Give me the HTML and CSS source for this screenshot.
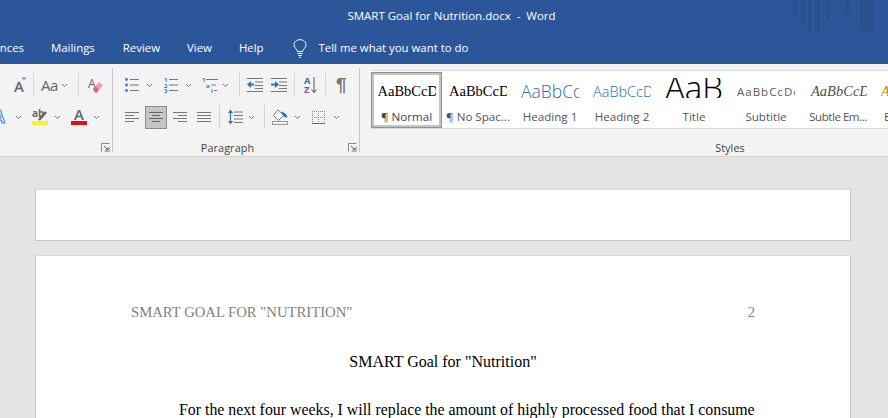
FILE: index.html
```html
<!DOCTYPE html>
<html lang="en">
<head>
<meta charset="utf-8">
<title>SMART Goal for Nutrition.docx - Word</title>
<link rel="stylesheet" href="styles.css">
</head>
<body>
<svg class="defs" width="0" height="0" aria-hidden="true">
  <symbol id="chev" viewBox="0 0 7 5"><path d="M1 1 3.500 3.500 6 1" fill="none" stroke="#777" stroke-width="1"/></symbol>
  <symbol id="launch" viewBox="0 0 9 9"><path d="M.5 8.500V.5H8.500" fill="none" stroke="#888"/><path d="M8.500 3.500V8.500H3.500" fill="none" stroke="#aaa"/><path d="M3 3 7 7M7 4.500V7H4.500" fill="none" stroke="#555"/></symbol>
</svg>
<header class="titlebar">
  <svg class="watermark" width="95" height="34" viewBox="0 0 95 34" aria-hidden="true">
    <g fill="#27508f"><rect x="0" width="5" height="16"/><rect x="7" width="5" height="25"/><rect x="15" width="4" height="31"/><rect x="22" width="5" height="32"/><rect x="33" width="3" height="20"/><rect x="52" width="4" height="14"/></g>
    <path d="M67 0H80V32H72Q67 28 67 20Z" fill="#2a4f89"/>
  </svg>
  <div class="doc-title">SMART Goal for Nutrition.docx&nbsp; - &nbsp;Word</div>
  <nav class="tabs">
    <span class="tab tab-clip">nces</span>
    <span class="tab t-mail">Mailings</span>
    <span class="tab t-rev">Review</span>
    <span class="tab t-view">View</span>
    <span class="tab t-help">Help</span>
    <svg class="bulb" width="14" height="19" viewBox="0 0 14 19" aria-hidden="true"><path d="M4.500 12.500C4 10 1 9 1 5.800 1 2.800 3.600 .7 7 .7S13 2.800 13 5.800C13 9 10 10 9.500 12.500ZM4.500 14.500H9.500M5 16.500H9M6 18.400H8" fill="none" stroke="#fff" stroke-width="1"/></svg>
    <span class="tab t-tell">Tell me what you want to do</span>
  </nav>
</header>
<section class="ribbon">
  <div class="group g-font">
    <div class="row">
      <svg class="ml14" width="13" height="18" viewBox="0 0 13 18"><text x="0" y="16" class="ico-a">A</text><path d="M7.500 1.500H12.500L10 4Z" fill="#4a86c5"/></svg>
      <i class="sep ml6"></i>
      <span class="aa ml7">Aa</span>
      <svg class="chev ml5"><use href="#chev"/></svg>
      <i class="sep ml10"></i>
      <svg class="ml9" width="15" height="18" viewBox="0 0 15 18"><text x="0" y="12" class="ico-a small">A</text><path d="M5 13 11 6 15 9 9 16.500H7Z" fill="#f09fae"/><path d="M5 13 7.500 10.500 11 13.500 9 16.500H7Z" fill="#e2637f"/></svg>
    </div>
    <div class="row">
      <svg class="mln8" width="16" height="18" viewBox="0 0 16 18"><text x="1" y="15" class="ico-fx">A</text></svg>
      <svg class="chev ml7"><use href="#chev"/></svg>
      <svg class="ml10" width="16" height="18" viewBox="0 0 16 18"><text x="0" y="9" class="ico-ab">ab</text><path d="M7 12 14 4" stroke="#666" stroke-width="2.600"/><rect y="13" width="16" height="4" fill="#ffee33"/></svg>
      <svg class="chev ml6"><use href="#chev"/></svg>
      <svg class="ml10" width="16" height="18" viewBox="0 0 16 18"><text x="3" y="12" class="ico-a">A</text><rect y="13" width="16" height="4" fill="#e30b17"/></svg>
      <svg class="chev ml6"><use href="#chev"/></svg>
    </div>
    <svg class="launcher"><use href="#launch"/></svg>
  </div>
  <div class="group g-para">
    <div class="row">
      <svg class="ml12" width="14" height="16" viewBox="0 0 14 16"><g fill="#3f78b5"><circle cx="1.500" cy="2.500" r="1.400"/><circle cx="1.500" cy="8" r="1.400"/><circle cx="1.500" cy="13.500" r="1.400"/></g><path d="M5 2.500H14M5 8H14M5 13.500H14" stroke="#777"/></svg>
      <svg class="chev ml7"><use href="#chev"/></svg>
      <svg class="ml11" width="14" height="16" viewBox="0 0 14 16"><g class="ico-num"><text x="0" y="5">1</text><text x="0" y="10.500">2</text><text x="0" y="16">3</text></g><path d="M5 2.500H14M5 8H14M5 13.500H14" stroke="#777"/></svg>
      <svg class="chev ml7"><use href="#chev"/></svg>
      <svg class="ml10" width="16" height="16" viewBox="0 0 16 16"><g class="ico-num"><text x="0" y="5">1</text><text x="4" y="10.500">a</text><text x="9" y="16">i</text></g><path d="M4 2.500H16M9 8H14M12 13.500H15" stroke="#777"/></svg>
      <svg class="chev ml4"><use href="#chev"/></svg>
      <i class="sep ml10"></i>
      <svg class="ml7" width="16" height="14" viewBox="0 0 16 14"><path d="M0 .5H16M8 4H16M8 7.500H16M8 10.500H16M0 13.500H16" stroke="#777"/><path d="M0 6.500 4 3V5.500H7V7.500H4V10Z" fill="#2e75b6"/></svg>
      <svg class="ml8" width="16" height="14" viewBox="0 0 16 14"><path d="M0 .5H16M8 4H16M8 7.500H16M8 10.500H16M0 13.500H16" stroke="#777"/><path d="M8 6.500 4 3V5.500H0V7.500H4V10Z" fill="#2e75b6"/></svg>
      <i class="sep ml7"></i>
      <svg class="ml9" width="13" height="18" viewBox="0 0 13 18"><text x="0" y="8" class="ico-az az-a">A</text><text x="0" y="17" class="ico-az az-z">Z</text><path d="M10 1V16M7.500 13.500 10 16.500 12.500 13.500" fill="none" stroke="#666" stroke-width="1.100"/></svg>
      <i class="sep ml8"></i>
      <span class="pilcrow ml10">¶</span>
    </div>
    <div class="row">
      <svg class="ml12" width="14" height="11" viewBox="0 0 14 11"><path d="M0 .5H14M0 3.500H9M0 6.500H14M0 9.500H9" stroke="#777"/></svg>
      <span class="active ml6"><svg width="14" height="11" viewBox="0 0 14 11"><path d="M0 .5H14M3 3.500H11M0 6.500H14M3 9.500H11" stroke="#666"/></svg></span>
      <svg class="ml6" width="14" height="11" viewBox="0 0 14 11"><path d="M0 .5H14M5 3.500H14M0 6.500H14M5 9.500H14" stroke="#777"/></svg>
      <svg class="ml10" width="14" height="11" viewBox="0 0 14 11"><path d="M0 .5H14M0 3.500H14M0 6.500H14M0 9.500H14" stroke="#777"/></svg>
      <i class="sep ml8"></i>
      <svg class="ml8" width="15" height="16" viewBox="0 0 15 16"><path d="M6 3H15M6 6.500H15M6 10H15M6 13.500H15" stroke="#777"/><path d="M2.500 3V13" stroke="#2e75b6" stroke-width="1.200"/><path d="M0 4 2.500 .5 5 4ZM0 12 2.500 15.500 5 12Z" fill="#2e75b6"/></svg>
      <svg class="chev ml5"><use href="#chev"/></svg>
      <i class="sep ml9"></i>
      <svg class="ml7" width="16" height="16" viewBox="0 0 16 16"><path d="M6 .8 1.500 6.500 6.500 11.500 11.500 6.500Z" fill="#fff" stroke="#777"/><path d="M9 2.500C12 3 15 5 15.500 8.500L12 8Z" fill="#2e75b6"/><rect x=".5" y="12.500" width="15" height="3" fill="none" stroke="#999"/></svg>
      <svg class="chev ml6"><use href="#chev"/></svg>
      <svg class="ml11" width="13" height="13" viewBox="0 0 13 13"><path d="M.5 0V12M6.500 0V12M12.500 0V12M0 .5H13M0 6.500H13" fill="none" stroke="#8a8a8a" stroke-dasharray="1 1"/><path d="M0 12.500H13" stroke="#666"/></svg>
      <svg class="chev ml8"><use href="#chev"/></svg>
    </div>
    <div class="g-label g-label-para">Paragraph</div>
    <svg class="launcher"><use href="#launch"/></svg>
  </div>
  <div class="group g-styles">
    <div class="gallery">
      <div class="style selected"><div class="pv pv-normal">AaBbCcDd</div><div class="lbl">¶ Normal</div></div>
      <div class="style"><div class="pv pv-normal">AaBbCcDd</div><div class="lbl">¶ No Spac...</div></div>
      <div class="style"><div class="pv pv-h1">AaBbCcD</div><div class="lbl">Heading 1</div></div>
      <div class="style"><div class="pv pv-h2">AaBbCcDd</div><div class="lbl">Heading 2</div></div>
      <div class="style"><div class="pv pv-title">AaB</div><div class="lbl">Title</div></div>
      <div class="style"><div class="pv pv-sub">AaBbCcDd</div><div class="lbl">Subtitle</div></div>
      <div class="style"><div class="pv pv-em pv-subtle">AaBbCcDd</div><div class="lbl lbl-tight">Subtle Em...</div></div>
      <div class="style"><div class="pv pv-em pv-int">AaBbCcDd</div><div class="lbl">Emphasis</div></div>
    </div>
    <div class="g-label g-label-styles">Styles</div>
  </div>
</section>
<main class="canvas">
  <div class="page page-end"></div>
  <article class="page page-two">
    <div class="running"><span>SMART GOAL FOR "NUTRITION"</span><span>2</span></div>
    <h1 class="doc-h">SMART Goal for "Nutrition"</h1>
    <p class="doc-p">For the next four weeks, I will replace the amount of highly processed food that I consume</p>
  </article>
</main>
</body>
</html>
```
FILE: styles.css
```css
* { box-sizing: border-box; }
html, body { margin: 0; height: 100%; overflow: hidden; }
body { width: 888px; height: 418px; background: #e4e4e4; font-family: "Open Sans", "Noto Sans", sans-serif; display: flex; flex-direction: column; }
.defs { display: block; height: 0; }

.titlebar { position: relative; height: 64px; background: #2b579a; color: #fff; flex: none; }
.watermark { position: absolute; left: 793px; top: 0; }
.doc-title { height: 32px; line-height: 32px; text-align: center; font-size: 11.500px; padding-left: 15px; }
.tabs { height: 32px; display: flex; align-items: center; font-size: 11.400px; position: relative; overflow: hidden; }
.tab { white-space: nowrap; line-height: 34px; }
.tab-clip { width: 24px; direction: rtl; overflow: hidden; }
.t-mail { margin-left: 27px; }
.t-rev { margin-left: 28px; }
.t-view { margin-left: 27px; }
.t-help { margin-left: 27px; }
.bulb { margin-left: 29px; flex: none; }
.t-tell { margin-left: 12px; }

.ribbon { height: 93px; flex: none; background: #f3f3f3; border-bottom: 1px solid #d4d4d4; display: flex; align-items: flex-start; overflow: hidden; }
.group { position: relative; margin-top: 4px; height: 84px; flex: none; border-right: 1px solid #c6c6c6; padding-top: 1px; }
.g-font { width: 113px; overflow: hidden; }
.g-para { width: 247px; }
.g-styles { width: 734px; border-right: 0; padding: 2px 0 0 11px; }
.row { height: 32px; display: flex; align-items: center; }
.row svg { flex: none; }
.chev { width: 7px; height: 5px; }
.sep { display: block; width: 1px; height: 24px; background: #d4d4d4; flex: none; }
.ml4 { margin-left: 4px; } .ml5 { margin-left: 5px; } .ml6 { margin-left: 6px; } .ml7 { margin-left: 7px; }
.ml8 { margin-left: 8px; } .ml9 { margin-left: 9px; } .ml10 { margin-left: 10px; } .ml11 { margin-left: 11px; }
.ml12 { margin-left: 12px; } .ml14 { margin-left: 14px; } .mln8 { margin-left: -8px; }

.ico-a { font: 600 15px "Open Sans", sans-serif; fill: #666; }
.ico-a.small { font-size: 12px; font-weight: 400; }
.ico-fx { font: 700 17px "Open Sans", sans-serif; fill: #dcebf8; stroke: #4a86c5; stroke-width: 1; }
.ico-ab { font: 700 10px "Open Sans", sans-serif; fill: #666; }
.ico-num text { font: 700 6px "Open Sans", sans-serif; fill: #3f78b5; }
.ico-az { font: 700 9.500px "Open Sans", sans-serif; }
.az-a { fill: #2e75b6; }
.az-z { fill: #7a5aa6; }
.aa { font-size: 15px; line-height: 18px; color: #666; font-weight: 400; width: 15px; letter-spacing: -.6px; white-space: nowrap; }
.pilcrow { font: 700 19px/20px "Liberation Sans", sans-serif; color: #777; }
.active { width: 22px; height: 23px; background: #c6c6c6; border: 1px solid #8a8a8a; display: flex; align-items: center; justify-content: center; flex: none; }

.launcher { position: absolute; right: 2px; bottom: 0; width: 9px; height: 9px; }
.g-label { position: absolute; left: 0; right: 0; top: 71px; height: 18px; line-height: 18px; text-align: center; font-size: 10.800px; color: #444; letter-spacing: .1px; }
.g-label-para { padding-right: 17px; }
.g-label-styles { padding-left: 6px; }

.gallery { height: 59px; background: #fff; border: solid #d8d8d8; border-width: 1px 0; display: flex; padding-top: 1px; }
.style { width: 72px; height: 56px; flex: none; padding-top: 7px; text-align: center; }
.style.selected { width: 71px; border: 1px solid #909090; box-shadow: inset 0 0 0 2px #c4c4c4; padding-top: 6px; }
.pv { width: 58px; height: 25px; line-height: 25px; margin: 0 auto; overflow: hidden; white-space: nowrap; text-align: left; }
.lbl { height: 20px; margin-top: 3px; line-height: 20px; font-size: 11.600px; color: #555; white-space: nowrap; }
.lbl-tight { letter-spacing: -.5px; }
.selected .lbl { color: #444; }
.pv-normal { font: 14.500px/25px "Liberation Serif", serif; color: #000; }
.pv-h1 { font: 300 17.500px/25px "Open Sans", sans-serif; color: #2a6cab; }
.pv-h2 { font: 300 14.500px/25px "Open Sans", sans-serif; color: #2a6cab; }
.pv-title { height: 20px; margin: -1px auto 9px; font: 300 33px/20px "Open Sans", sans-serif; color: #000; }
.pv-sub { font: 400 11.500px/25px "Open Sans", sans-serif; color: #595959; letter-spacing: 1px; }
.pv-em { font: italic 14.500px/25px "Liberation Serif", serif; color: #505050; }
.pv-subtle { text-indent: 2px; }
.pv-int { color: #b8860b; }

.canvas { flex: 1; padding: 32px 37px 0 35px; overflow: hidden; }
.page { background: #fff; border: 1px solid #c8c8c8; border-top-color: #dadada; }
.page-end { height: 52px; }
.page-two { margin-top: 14px; height: 300px; padding: 46px 95px 0; font-family: "Liberation Serif", serif; font-size: 15.870px; color: #000; }
.running { display: flex; justify-content: space-between; color: #7f7f7f; line-height: 20px; font-size: 14.700px; }
.doc-h { margin: 30px 0 0; font-size: 16px; font-weight: 400; line-height: 20px; text-align: center; }
.doc-p { margin: 28px 0 0; line-height: 20px; text-indent: 48px; white-space: nowrap; }
```
